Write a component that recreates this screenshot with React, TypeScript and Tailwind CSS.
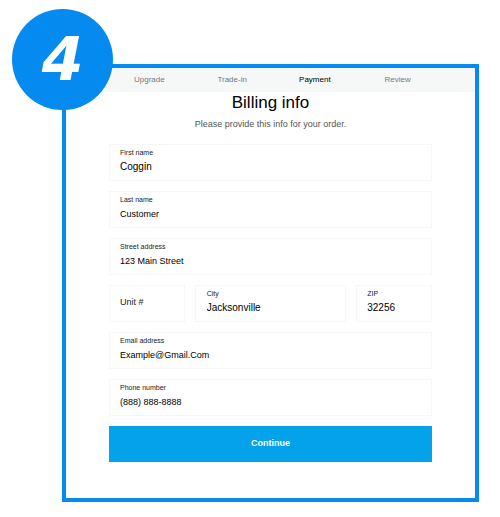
import React from "react";

const steps = ["Upgrade", "Trade-in", "Payment", "Review"];

type FieldProps = {
  id: string;
  label: string;
  value: string;
  type?: string;
  large?: boolean;
  className?: string;
};

function Field({ id, label, value, type = "text", large, className = "pl-[10px]" }: FieldProps) {
  return (
    <div className={`flex h-[37px] min-w-0 flex-col gap-1 border border-[#f7f7f7] pt-1 ${className}`}>
      <label htmlFor={id} className="text-[7px] leading-[8px] text-[#222222]">
        {label}
      </label>
      <input
        id={id}
        type={type}
        defaultValue={value}
        className={`h-3 w-full bg-transparent leading-3 text-black outline-none ${
          large ? "text-[10px]" : "text-[9px]"
        }`}
      />
    </div>
  );
}

export default function App() {
  return (
    <main className="bg-white pt-16 pr-[21px] pb-[14px] pl-[62px] font-['Liberation_Sans',Arial,sans-serif]">
      <section className="relative border-4 border-[#058bf0] bg-white pb-9">
        <div className="absolute -top-[59px] -left-[54px] flex size-[101px] items-center justify-center rounded-full bg-[#058bf0] pb-[2px]">
          <span className="font-['DejaVu_Sans',sans-serif] text-[60px] leading-[60px] font-bold text-white italic">
            4
          </span>
        </div>

        <nav className="bg-[#f6f7f7] pr-9 pl-[42px]">
          <ol className="grid grid-cols-4 text-center text-[8px] leading-6">
            {steps.map((step) => (
              <li
                key={step}
                aria-current={step === "Payment" ? "step" : undefined}
                className={step === "Payment" ? "text-black" : "text-[#777777]"}
              >
                {step}
              </li>
            ))}
          </ol>
        </nav>

        <div className="px-[43px]">
          <h1 className="text-center text-[17px] leading-[22px] text-black">Billing info</h1>
          <p className="mt-1 text-center text-[9px] leading-3 text-[#555555]">
            Please provide this info for your order.
          </p>

          <form className="mt-[14px] flex flex-col gap-[10px]">
            <Field id="first-name" label="First name" value="Coggin" large />
            <Field id="last-name" label="Last name" value="Customer" />
            <Field id="street" label="Street address" value="123 Main Street" />
            <div className="grid grid-cols-[1fr_2fr_1fr] gap-[10px]">
              <input
                type="text"
                aria-label="Unit number"
                placeholder="Unit #"
                className="h-[37px] min-w-0 border border-[#f7f7f7] pb-1 pl-[10px] text-[9px] text-black outline-none placeholder:text-[#222222]"
              />
              <Field id="city" label="City" value="Jacksonville" large className="pl-[11px]" />
              <Field id="zip" label="ZIP" value="32256" large />
            </div>
            <Field id="email" label="Email address" value="Example@Gmail.Com" type="email" />
            <Field id="phone" label="Phone number" value="(888) 888-8888" type="tel" />
            <button type="button" className="h-9 bg-[#04a2ea] text-[9px] font-bold text-white">
              Continue
            </button>
          </form>
        </div>
      </section>
    </main>
  );
}
